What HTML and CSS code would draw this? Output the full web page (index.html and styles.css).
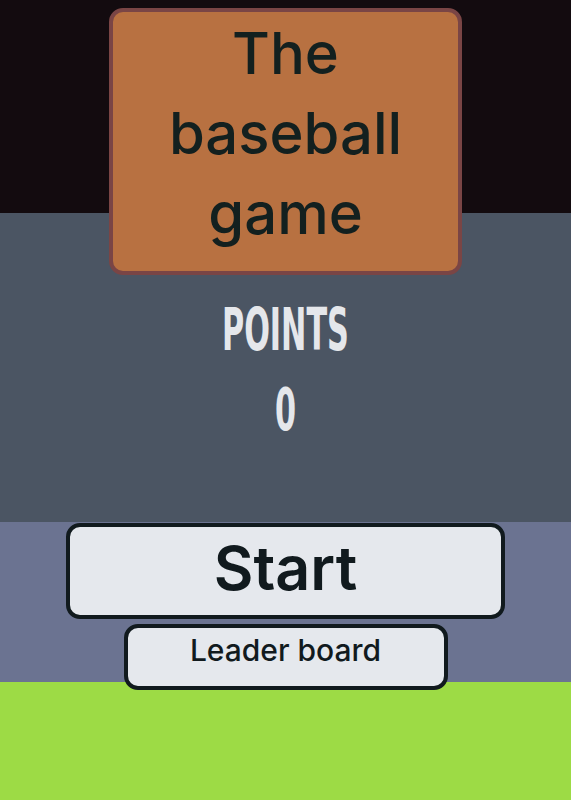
FILE: index.html
```html
<!DOCTYPE html>
<html lang="en">
<head>
    <meta charset="UTF-8">
    <meta name="viewport" content="width=device-width, initial-scale=1.0">
    <title>The baseball game</title>
    <link rel="stylesheet" href="styles.css">
</head>
<body>
    <div class="page">
        <div class="title-card">The baseball game</div>
        <div class="points">
            <div class="points-label">POINTS</div>
            <div class="points-value" id="points">0</div>
        </div>
        <div class="buttons">
            <div class="button start">Start</div>
            <div class="button leader">Leader board</div>
        </div>
    </div>
</body>
</html>
```

FILE: styles.css
```css
body {
    margin: 0;
    padding: 0;
    font-family: Inter, "Open Sans", sans-serif;
    background: linear-gradient(to bottom,
        #130b0f 0, #130b0f 213px,
        #4b5563 213px, #4b5563 522px,
        #6b7391 522px, #6b7391 682px,
        #9ddb45 682px);
    min-height: 800px;
}
.page {
    padding-top: 8px;
    display: flex;
    flex-direction: column;
    align-items: center;
}
.title-card {
    box-sizing: border-box;
    width: 353px;
    height: 267px;
    padding: 1px 40px 0;
    background-color: #b87141;
    border: 4px solid #7a4545;
    border-radius: 14px;
    color: #13201f;
    font-size: 58px;
    font-weight: 500;
    line-height: 80px;
    text-align: center;
}
.points {
    margin-top: 15px;
    color: #e5e7eb;
    font-family: "DejaVu Sans Condensed", sans-serif;
    font-size: 58px;
    font-weight: bold;
    line-height: 80px;
    text-align: center;
}
.points-label,
.points-value {
    transform: scaleX(0.58);
}
.buttons {
    margin-top: 73px;
    display: flex;
    flex-direction: column;
    align-items: center;
    gap: 5px;
}
.button {
    box-sizing: border-box;
    display: flex;
    align-items: center;
    justify-content: center;
    background-color: #e5e8ed;
    border: 4px solid #111a1e;
    border-radius: 14px;
    color: #111a1e;
    cursor: pointer;
}
.start {
    width: 439px;
    height: 96px;
    font-size: 61px;
    font-weight: 600;
    padding-bottom: 6px;
}
.leader {
    width: 324px;
    height: 66px;
    font-size: 30px;
    font-weight: 500;
    padding-bottom: 14px;
}
```
